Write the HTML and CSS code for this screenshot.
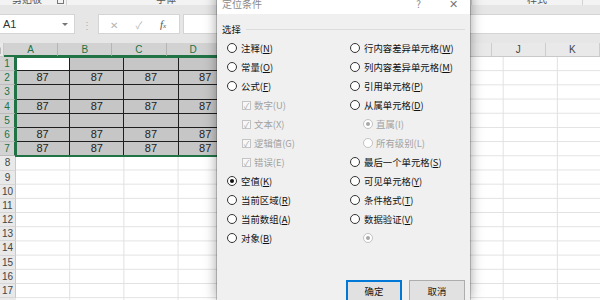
FILE: index.html
```html
<!DOCTYPE html>
<html lang="zh-CN">
<head>
    <meta charset="UTF-8">
    <title>定位条件</title>
    <link rel="stylesheet" href="styles.css">
</head>
<body>
    <div class="ribbon">
        <div class="group g-clip"><span class="label">剪贴板</span><span class="launcher"></span></div>
        <div class="group g-font"><span class="label">字体</span></div>
        <div class="group g-align"></div>
        <div class="group g-style"><span class="label">样式</span></div>
        <div class="group g-rest"></div>
    </div>

    <div class="formula-bar">
        <div class="name-box">A1<span class="arrow"></span></div>
        <div class="grip">⋮</div>
        <div class="fx-buttons">
            <span class="cancel">✕</span>
            <span class="enter">✓</span>
            <span class="fx">f<small>x</small></span>
        </div>
        <div class="formula-input"></div>
    </div>

    <div class="col-headers">
        <div class="corner"><span class="tri"></span></div>
        <div class="col sel">A</div>
        <div class="col sel">B</div>
        <div class="col sel">C</div>
        <div class="col sel">D</div>
        <div class="col">E</div>
        <div class="col">F</div>
        <div class="col">G</div>
        <div class="col">H</div>
        <div class="col">I</div>
        <div class="col">J</div>
        <div class="col">K</div>
    </div>

    <div class="sheet">
        <div class="row-headers">
            <div class="rh sel">1</div>
            <div class="rh sel">2</div>
            <div class="rh sel">3</div>
            <div class="rh sel">4</div>
            <div class="rh sel">5</div>
            <div class="rh sel">6</div>
            <div class="rh sel">7</div>
            <div class="rh">8</div>
            <div class="rh">9</div>
            <div class="rh">10</div>
            <div class="rh">11</div>
            <div class="rh">12</div>
            <div class="rh">13</div>
            <div class="rh">14</div>
            <div class="rh">15</div>
            <div class="rh">16</div>
            <div class="rh">17</div>
        </div>
        <div class="cells">
            <div class="selection">
                <div class="cell active"></div><div class="cell"></div><div class="cell"></div><div class="cell"></div>
                <div class="cell">87</div><div class="cell">87</div><div class="cell">87</div><div class="cell">87</div>
                <div class="cell"></div><div class="cell"></div><div class="cell"></div><div class="cell"></div>
                <div class="cell">87</div><div class="cell">87</div><div class="cell">87</div><div class="cell">87</div>
                <div class="cell"></div><div class="cell"></div><div class="cell"></div><div class="cell"></div>
                <div class="cell">87</div><div class="cell">87</div><div class="cell">87</div><div class="cell">87</div>
                <div class="cell">87</div><div class="cell">87</div><div class="cell">87</div><div class="cell">87</div>
            </div>
        </div>
    </div>

    <!-- Go To Special dialog -->
    <div class="dialog">
        <div class="titlebar">
            <span class="title">定位条件</span>
            <span class="help">?</span>
            <span class="close">✕</span>
        </div>
        <div class="group-label"><span>选择</span></div>
        <div class="options">
            <div class="opt"><span class="radio"></span>注释(<u>N</u>)</div>
            <div class="opt"><span class="radio"></span>常量(<u>O</u>)</div>
            <div class="opt"><span class="radio"></span>公式(<u>F</u>)</div>
            <div class="opt sub-check disabled"><span class="check">✓</span>数字(U)</div>
            <div class="opt sub-check disabled"><span class="check">✓</span>文本(X)</div>
            <div class="opt sub-check disabled"><span class="check">✓</span>逻辑值(G)</div>
            <div class="opt sub-check disabled"><span class="check">✓</span>错误(E)</div>
            <div class="opt"><span class="radio on"></span>空值(<u>K</u>)</div>
            <div class="opt"><span class="radio"></span>当前区域(<u>R</u>)</div>
            <div class="opt"><span class="radio"></span>当前数组(<u>A</u>)</div>
            <div class="opt"><span class="radio"></span>对象(<u>B</u>)</div>

            <div class="opt"><span class="radio"></span>行内容差异单元格(<u>W</u>)</div>
            <div class="opt"><span class="radio"></span>列内容差异单元格(<u>M</u>)</div>
            <div class="opt"><span class="radio"></span>引用单元格(<u>P</u>)</div>
            <div class="opt"><span class="radio"></span>从属单元格(<u>D</u>)</div>
            <div class="opt sub-radio disabled"><span class="radio on"></span>直属(I)</div>
            <div class="opt sub-radio disabled"><span class="radio"></span>所有级别(L)</div>
            <div class="opt"><span class="radio"></span>最后一个单元格(<u>S</u>)</div>
            <div class="opt"><span class="radio"></span>可见单元格(<u>Y</u>)</div>
            <div class="opt"><span class="radio"></span>条件格式(<u>T</u>)</div>
            <div class="opt"><span class="radio"></span>数据验证(<u>V</u>)</div>
            <div class="opt sub-radio disabled"><span class="radio on"></span></div>
        </div>
        <div class="buttons">
            <button class="default">确定</button>
            <button>取消</button>
        </div>
    </div>
</body>
</html>
```

FILE: styles.css
```css
* {
    margin: 0;
    padding: 0;
    box-sizing: border-box;
}
html, body {
    overflow: hidden;
}
body {
    width: 600px;
    height: 300px;
    position: relative;
    background: #fff;
    font-family: "Noto Sans CJK SC", "Liberation Sans", sans-serif;
    color: #222;
}

/* ribbon (only its bottom edge is visible) */
.ribbon {
    height: 5px;
    display: flex;
    overflow: hidden;
    background: #f3f3f3;
    font-size: 10px;
    color: #555;
}
.group {
    height: 5px;
    position: relative;
    border-right: 1px solid #d2d2d2;
}
.group .label {
    display: block;
    line-height: 10px;
    margin-top: -6px;
    white-space: nowrap;
}
.g-clip { width: 67px; padding-left: 12px; }
.g-font { width: 192px; padding-left: 89px; }
.g-align { width: 213px; }
.g-style { width: 111px; padding-left: 55px; }
.g-rest { flex: 1; border-right: none; }
.launcher {
    position: absolute;
    right: 2px;
    top: -3px;
    width: 7px;
    height: 7px;
    border: 1px solid #777;
}

/* name box + formula bar */
.formula-bar {
    height: 38px;
    display: flex;
    align-items: center;
    background: #e6e6e6;
}
.name-box {
    width: 75px;
    height: 20px;
    background: #fff;
    border: 1px solid #d4d4d4;
    border-left: none;
    display: flex;
    align-items: center;
    padding-left: 3px;
    font-family: "Liberation Sans", sans-serif;
    font-size: 11px;
    color: #333;
    position: relative;
}
.name-box .arrow {
    position: absolute;
    right: 6px;
    top: 8px;
    border-left: 3px solid transparent;
    border-right: 3px solid transparent;
    border-top: 3px solid #777;
}
.grip {
    width: 23px;
    text-align: center;
    color: #b0b0b0;
    font-size: 10px;
}
.fx-buttons {
    width: 82px;
    height: 20px;
    background: #fff;
    border: 1px solid #d4d4d4;
    display: flex;
    align-items: center;
    justify-content: space-around;
    padding: 0 4px 0 2px;
    color: #b4b4b4;
    font-size: 10px;
}
.fx-buttons .fx {
    font-family: "Liberation Serif", serif;
    font-style: italic;
    font-size: 11px;
    color: #555;
}
.fx-buttons .fx small {
    font-size: 7px;
}
.formula-input {
    flex: 1;
    height: 20px;
    margin-left: 3px;
    background: #fff;
    border: 1px solid #d4d4d4;
    border-right: none;
}

/* column headers */
.col-headers {
    height: 14px;
    display: flex;
    background: #e9e9e9;
    font-family: "Liberation Sans", sans-serif;
    font-size: 10px;
    color: #444;
}
.corner {
    width: 16px;
    position: relative;
    border-right: 1px solid #c9c9c9;
    border-bottom: 1px solid #c9c9c9;
}
.corner .tri {
    position: absolute;
    right: 2px;
    bottom: 2px;
    border-left: 7px solid transparent;
    border-bottom: 7px solid #b9b9b9;
}
.col {
    flex: 0 0 54.2px;
    text-align: center;
    line-height: 13px;
    border-right: 1px solid #cdcdcd;
    border-bottom: 1px solid #c9c9c9;
}
.col.sel {
    background: #d2d2d2;
    color: #217346;
    border-right-color: #b5b5b5;
    border-bottom: 2px solid #217346;
}

/* sheet body */
.sheet {
    display: flex;
    height: 243px;
}
.row-headers {
    width: 16px;
    flex: none;
    background: #e9e9e9;
    font-family: "Liberation Sans", sans-serif;
    font-size: 10px;
    color: #444;
}
.rh {
    height: 14.2px;
    line-height: 14px;
    text-align: center;
    border-bottom: 1px solid #d6d6d6;
    border-right: 1px solid #c9c9c9;
}
.rh.sel {
    background: #d2d2d2;
    color: #217346;
    border-bottom-color: #bcbcbc;
    border-right: 2px solid #217346;
}
.cells {
    flex: 1;
    background-image:
        linear-gradient(to right, #e1e1e1 1px, transparent 1px),
        linear-gradient(to bottom, #e1e1e1 1px, transparent 1px);
    background-size: 54.2px 14.2px;
    background-position: 53.2px 13.2px;
}
.selection {
    width: 216.8px;
    display: grid;
    grid-template-columns: repeat(4, 54.2px);
    grid-auto-rows: 14.2px;
    outline: 2px solid #217346;
    outline-offset: -1px;
    font-family: "Liberation Sans", sans-serif;
    font-size: 11px;
    color: #222;
}
.cell {
    background: #c6c6c6;
    border-right: 1px solid #1e1e1e;
    border-bottom: 1px solid #1e1e1e;
    text-align: center;
    line-height: 13px;
}
.cell.active {
    background: #fff;
}

/* dialog */
.dialog {
    position: absolute;
    left: 217px;
    top: -8px;
    width: 253px;
    height: 308px;
    overflow: hidden;
    background: #f0f0f0;
    box-shadow: 0 0 0 1px rgba(0, 0, 0, 0.18), 0 0 12px rgba(0, 0, 0, 0.4);
    font-size: 9.4px;
    color: #111;
    display: flex;
    flex-direction: column;
}
.titlebar {
    height: 22px;
    flex: none;
    background: #fff;
    display: flex;
    align-items: center;
    color: #8a8a8a;
}
.titlebar .title {
    flex: 1;
    padding-left: 5px;
    font-size: 10px;
}
.titlebar .help {
    width: 35px;
    text-align: center;
    font-size: 10px;
}
.titlebar .close {
    width: 34px;
    text-align: center;
    font-size: 11px;
    color: #777;
}
.group-label {
    height: 14px;
    flex: none;
    margin-top: 8px;
    padding: 0 5px;
    display: flex;
    align-items: center;
}
.group-label::after {
    content: "";
    flex: 1;
    height: 1px;
    margin-left: 5px;
    background: #dcdcdc;
}
.options {
    margin-top: 2.5px;
    padding-left: 10px;
    display: grid;
    grid-template-columns: 123px 1fr;
    grid-template-rows: repeat(11, 19px);
    grid-auto-flow: column;
}
.opt {
    display: flex;
    align-items: center;
    white-space: nowrap;
}
.opt u {
    text-underline-offset: 1px;
}
.radio {
    width: 10px;
    height: 10px;
    margin-right: 4px;
    border: 1px solid #333;
    border-radius: 50%;
    background: #fff;
    display: flex;
    align-items: center;
    justify-content: center;
    flex: none;
}
.radio.on::after {
    content: "";
    width: 4px;
    height: 4px;
    border-radius: 50%;
    background: #111;
}
.check {
    width: 9px;
    height: 9px;
    margin-right: 3px;
    border: 1px solid #c4c4c4;
    background: #f7f7f7;
    font-size: 8px;
    line-height: 7px;
    text-align: center;
    flex: none;
}
.sub-check {
    padding-left: 15px;
}
.sub-radio {
    padding-left: 13px;
}
.sub-radio .radio {
    margin-right: 3px;
}
.disabled {
    color: #a2a2a2;
}
.disabled .radio {
    border-color: #c2c2c2;
}
.disabled .radio.on::after {
    background: #a8a8a8;
}
.disabled .check {
    color: #a8a8a8;
}
.buttons {
    margin-top: 32.5px;
    flex: none;
    display: flex;
    justify-content: flex-end;
    gap: 7px;
    padding-right: 5px;
}
button {
    width: 56px;
    height: 22px;
    background: #e1e1e1;
    border: 1px solid #adadad;
    font-family: "Noto Sans CJK SC", sans-serif;
    font-size: 9.4px;
    color: #111;
}
button.default {
    border: 2px solid #0078d7;
}
```
